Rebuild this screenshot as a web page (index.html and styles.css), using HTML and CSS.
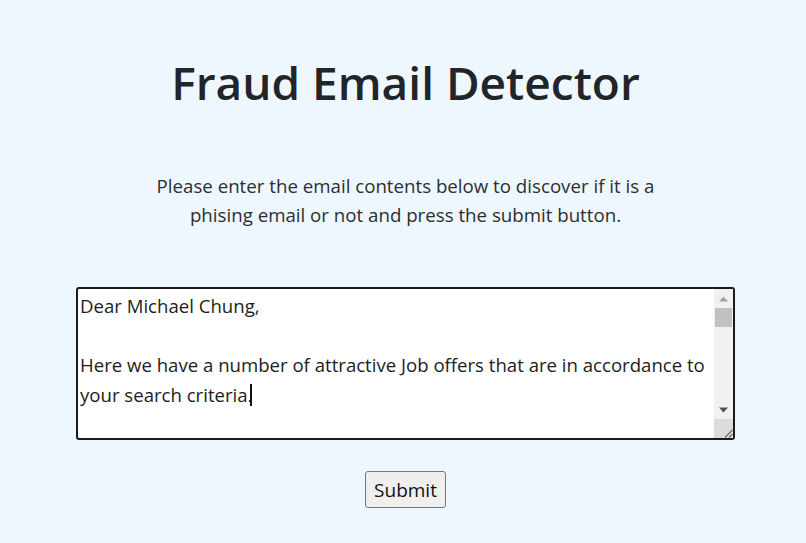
FILE: index.html
```html
<!DOCTYPE html>
<html lang="en">
<head>
<meta charset="utf-8">
<title>Fraud Email Detector</title>
<link rel="stylesheet" href="styles.css">
</head>
<body>
<main class="page">
  <h1 class="title">Fraud Email Detector</h1>
  <p class="intro">Please enter the email contents below to discover if it is a<br>phising email or not and press the submit button.</p>
  <form class="form">
    <div class="field">
      <textarea class="email" spellcheck="false">Dear Michael Chung,

Here we have a number of attractive Job offers that are in accordance to your search criteria.</textarea>
      <span class="caret" aria-hidden="true"></span>
      <div class="scrollbar" aria-hidden="true">
        <div class="sb-arrow sb-up"><svg width="9" height="6" viewBox="0 0 9 6"><path d="M0 5.5 L4.5 0.5 L9 5.5 Z" fill="#a3a3a3"/></svg></div>
        <div class="sb-track"><div class="sb-thumb"></div></div>
        <div class="sb-arrow sb-down"><svg width="9" height="6" viewBox="0 0 9 6"><path d="M0 0.5 L4.5 5.5 L9 0.5 Z" fill="#505050"/></svg></div>
        <div class="sb-corner"><svg width="10" height="10" viewBox="0 0 10 10"><path d="M9.5 2 L2 9.5 M9.5 6 L6 9.5" stroke="#6a6a6a" stroke-width="1.1" fill="none"/></svg></div>
      </div>
    </div>
    <button type="submit" class="submit">Submit</button>
  </form>
</main>
</body>
</html>
```

FILE: styles.css
```css
html, body {
  margin: 0;
  padding: 0;
}
body {
  background: #eef6fe;
  color: #212529;
  font-family: "Open Sans", "Noto Sans", "DejaVu Sans", sans-serif;
  width: 806px;
  height: 543px;
  overflow: hidden;
}
.page {
  display: flex;
  flex-direction: column;
  align-items: center;
  padding-top: 52px;
  padding-left: 5px;
}
.title {
  margin: 0;
  font-size: 46px;
  font-weight: 600;
  line-height: 60px;
  color: #212529;
  letter-spacing: 0;
}
.intro {
  margin: 59px 0 0;
  font-size: 18.7px;
  line-height: 29px;
  text-align: center;
  color: #2b2f33;
}
.form {
  margin-top: 58px;
  display: flex;
  flex-direction: column;
  align-items: center;
}
.field {
  position: relative;
  width: 659px;
  height: 153px;
}
.email {
  box-sizing: border-box;
  display: block;
  width: 659px;
  height: 153px;
  margin: 0;
  padding: 2px 24px 2px 2px;
  border: 2px solid #1b1b1b;
  border-radius: 3px;
  background: #fff;
  color: #1d1d1d;
  font-family: inherit;
  font-size: 18.6px;
  line-height: 29.5px;
  resize: none;
  overflow: hidden;
  outline: none;
}
.caret {
  position: absolute;
  left: 174px;
  top: 97px;
  width: 2px;
  height: 22px;
  background: #111;
}
.scrollbar {
  position: absolute;
  top: 2px;
  right: 2px;
  bottom: 2px;
  width: 19px;
  background: #f1f1f1;
  display: flex;
  flex-direction: column;
}
.sb-arrow {
  height: 19px;
  display: flex;
  align-items: center;
  justify-content: center;
}
.sb-track {
  flex: 1;
  padding: 0 1px;
}
.sb-thumb {
  height: 19px;
  background: #c1c1c1;
}
.sb-corner {
  height: 19px;
  background: #dcdcdc;
  display: flex;
  align-items: flex-end;
  justify-content: flex-end;
}
.submit {
  margin-top: 31px;
  box-sizing: border-box;
  height: 37px;
  padding: 0 8px;
  font-family: inherit;
  font-size: 19px;
  color: #111;
  background: #efefef;
  border: 1px solid #767676;
  border-radius: 3px;
}
```
